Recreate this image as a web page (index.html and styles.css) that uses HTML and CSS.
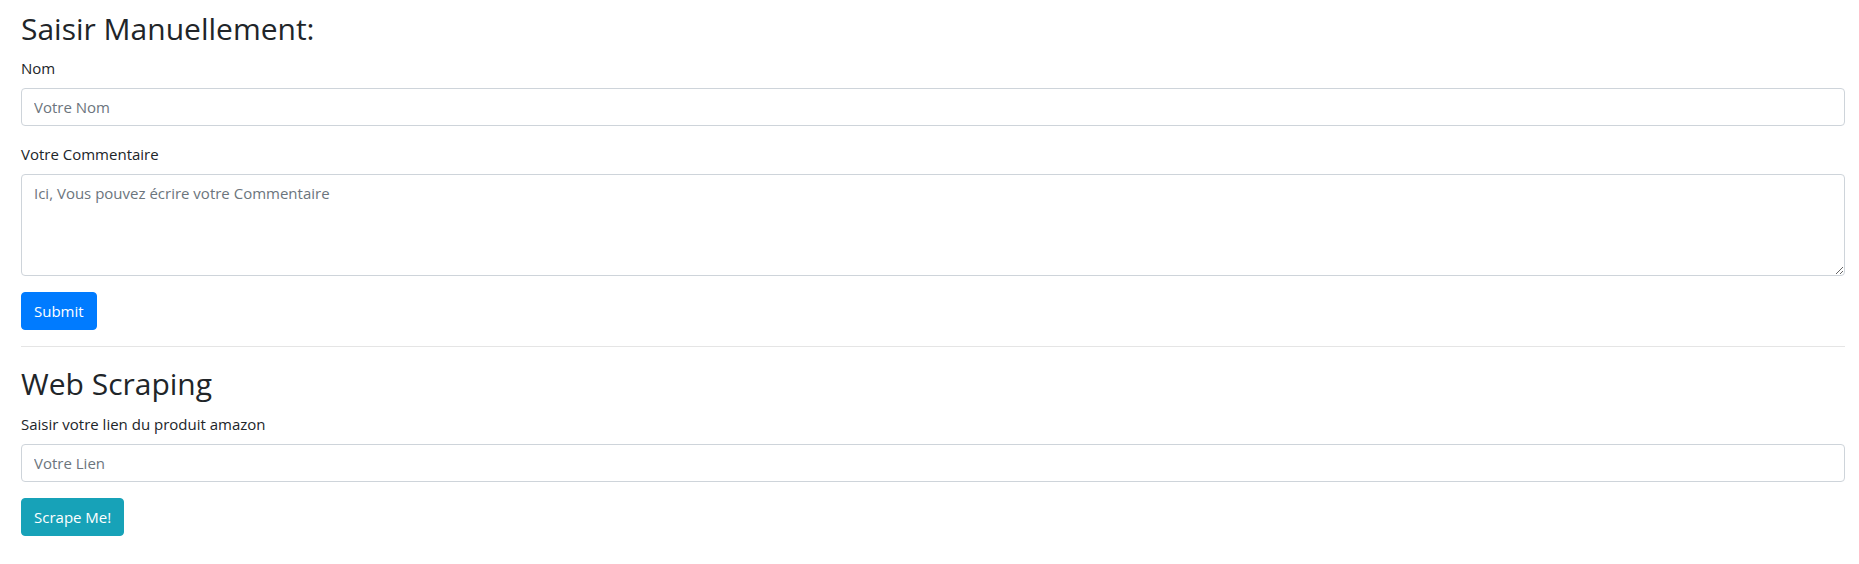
FILE: index.html
```html
<!DOCTYPE html>
<html lang="fr">
<head>
<meta charset="utf-8">
<title>Commentaires</title>
<link rel="stylesheet" href="styles.css">
</head>
<body>
<div class="container">
  <h2 class="title">Saisir Manuellement:</h2>
  <form class="form">
    <div class="form-group">
      <label class="label" for="nom">Nom</label>
      <input class="control" id="nom" type="text" placeholder="Votre Nom">
    </div>
    <div class="form-group">
      <label class="label" for="com">Votre Commentaire</label>
      <textarea class="control area" id="com" placeholder="Ici, Vous pouvez écrire votre Commentaire"></textarea>
    </div>
    <button type="button" class="btn btn-primary">Submit</button>
  </form>
  <hr class="sep">
  <h2 class="title">Web Scraping</h2>
  <form class="form">
    <div class="form-group">
      <label class="label" for="lien">Saisir votre lien du produit amazon</label>
      <input class="control" id="lien" type="text" placeholder="Votre Lien">
    </div>
    <button type="button" class="btn btn-info">Scrape Me!</button>
  </form>
</div>
</body>
</html>
```
FILE: styles.css
```css
* { box-sizing: border-box; }
html, body { margin: 0; padding: 0; background: #fff; }
body {
  font-family: "Open Sans", "Noto Sans", "Liberation Sans", sans-serif;
  font-size: 16px;
  line-height: 24px;
  color: #212529;
}
.container {
  padding: 10px 14px 0 21px;
}
.title {
  margin: 0 0 8px;
  font-size: 30px;
  font-weight: 400;
  line-height: 38.4px;
}
.form { margin: 0; }
.form-group { margin-bottom: 16px; }
.label {
  display: inline-block;
  margin-bottom: 8px;
  font-size: 15px;
  line-height: 24px;
}
.control {
  display: block;
  width: 100%;
  height: 38px;
  padding: 6px 12px;
  font: inherit;
  font-size: 15px;
  line-height: 24px;
  color: #495057;
  background: #fff;
  border: 1px solid #ced4da;
  border-radius: 4px;
}
.control::placeholder { color: #6c757d; opacity: 1; }
.area { height: 102px; resize: vertical; }
.btn {
  display: inline-block;
  height: 38px;
  padding: 6px 12px;
  font: inherit;
  font-size: 15px;
  line-height: 24px;
  color: #fff;
  border: 1px solid transparent;
  border-radius: 4px;
  cursor: pointer;
}
.btn-primary { background: #007bff; border-color: #007bff; }
.btn-info { background: #17a2b8; border-color: #17a2b8; }
.sep {
  margin: 16px 0 18px;
  border: 0;
  border-top: 1px solid rgba(0,0,0,.1);
}
```
